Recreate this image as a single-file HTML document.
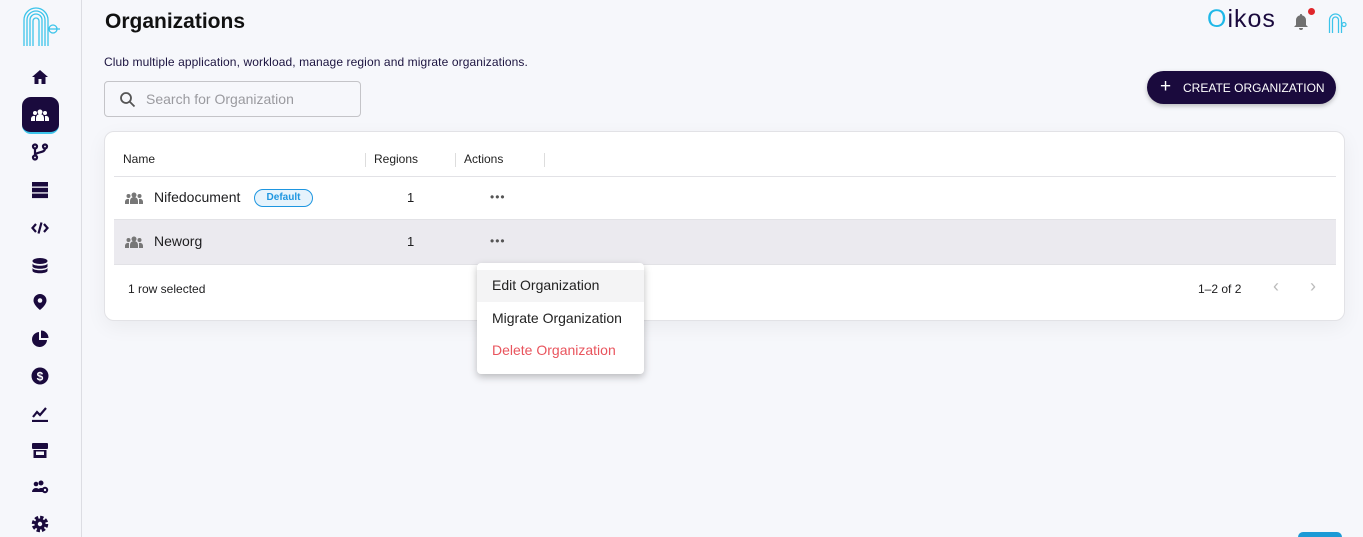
<!DOCTYPE html>
<html><head><meta charset="utf-8"><style>
*{box-sizing:border-box;margin:0;padding:0}
html{width:1363px;height:537px;overflow:hidden}
body{width:1363px;height:537px;overflow:hidden;background:#f6f7fb;font-family:"Liberation Sans",sans-serif;color:#1d1d1f;position:relative}
.side{position:absolute;left:0;top:0;width:82px;height:537px;border-right:1px solid #dcdde3;background:#f6f7fb}
.ic{position:absolute;left:31px;width:18px;height:18px}
.abs{position:absolute}
h1{position:absolute;left:105px;top:10px;font-size:21px;font-weight:bold;color:#111}
.sub{position:absolute;left:104px;top:55px;font-size:12px;color:#1c1440;letter-spacing:.1px}
.search{position:absolute;left:104px;top:81px;width:257px;height:36px;border:1px solid #c4c4c8;border-radius:4px;background:#f6f7fb}
.search span{position:absolute;left:41px;top:9px;font-size:14px;color:#9a9a9f}
.btn{position:absolute;left:1147px;top:71px;width:189px;height:33px;border-radius:17px;background:#1a0a3d;color:#fff;font-size:12px;box-shadow:0 2px 5px rgba(0,0,0,.25)}
.card{position:absolute;left:104px;top:131px;width:1241px;height:190px;background:#fff;border:1px solid #e2e2e6;border-radius:10px;box-shadow:0 6px 20px rgba(0,0,0,.05)}
.th{position:absolute;top:20px;font-size:12px;color:#222}
.sep{position:absolute;top:21px;width:1px;height:14px;background:#ddd}
.row{position:absolute;left:9px;width:1222px;height:44px;border-bottom:1px solid #e2e2e6}
.menu{position:absolute;left:477px;top:263px;width:167px;height:111px;background:#fff;border-radius:4px;box-shadow:0 3px 8px rgba(0,0,0,.25);font-size:14px}
.menu div{position:absolute;left:15px}
</style></head><body>
<div class="side">
 <svg class="abs" style="left:20px;top:4px" width="42" height="44" viewBox="0 0 42 44" fill="none" stroke="#3cc4ea" stroke-width="1.3">
  <path d="M4 42V16a12 12 0 0 1 24 0v26"/><path d="M7 42V16a9 9 0 0 1 18 0v26"/><path d="M10 42V16a6 6 0 0 1 12 0v26"/><path d="M13 42V17a3 3 0 0 1 6 0v25"/><circle cx="33" cy="25" r="4"/><path d="M29 25h11"/>
 </svg>
 <svg class="ic" style="top:68px" viewBox="0 0 18 18"><path d="M9 2L1 9h2.5v7h4v-5h3v5h4V9H17z" fill="#1a0a3d"/></svg>
 <div class="abs" style="left:22px;top:97px;width:37px;height:37px;border-radius:9px;background:#1a0a3d;border-bottom:2px solid #3cc4ea"></div>
 <svg class="ic" style="top:106px;left:31px" viewBox="0 0 18 18" fill="#fff"><circle cx="9" cy="6" r="2.5"/><path d="M5 15v-3a4 4 0 0 1 8 0v3z"/><circle cx="4" cy="7" r="2"/><circle cx="14" cy="7" r="2"/><path d="M0 15v-2a3 3 0 0 1 4-3v5zM18 15v-2a3 3 0 0 0-4-3v5z"/></svg>
 <svg class="ic" style="top:143px" viewBox="0 0 18 18" fill="none" stroke="#1a0a3d" stroke-width="2.2"><circle cx="4" cy="3.5" r="2"/><circle cx="4" cy="14.5" r="2"/><circle cx="14" cy="3.5" r="2"/><path d="M4 5.5v7M14 5.5c0 5-10 3-10 7"/></svg>
 <svg class="ic" style="top:181px" viewBox="0 0 18 18" fill="#1a0a3d"><rect x="1" y="1" width="16" height="4.5"/><rect x="1" y="6.8" width="16" height="4.5"/><rect x="1" y="12.6" width="16" height="4.5"/></svg>
 <svg class="ic" style="top:219px" viewBox="0 0 18 18" fill="none" stroke="#1a0a3d" stroke-width="2.2"><path d="M5 5L1.5 9 5 13M13 5l3.5 4-3.5 4M10.5 3.5l-3 11"/></svg>
 <svg class="ic" style="top:257px" viewBox="0 0 18 18" fill="#1a0a3d"><ellipse cx="9" cy="4" rx="7.5" ry="3"/><path d="M1.5 6.5c1 3 14 3 15 0v3c-1 3-14 3-15 0zM1.5 11c1 3 14 3 15 0v3c-1 3-14 3-15 0z"/></svg>
 <svg class="ic" style="top:293px" viewBox="0 0 18 18" fill="#1a0a3d"><path d="M9 1a6.5 6.5 0 0 1 6.5 6.5C15.5 12 9 17 9 17S2.5 12 2.5 7.5A6.5 6.5 0 0 1 9 1z"/><circle cx="9" cy="7.5" r="2.3" fill="#f6f7fb"/></svg>
 <svg class="ic" style="top:330px" viewBox="0 0 18 18" fill="#1a0a3d"><path d="M8 2a7.5 7.5 0 1 0 8 8H8z"/><path d="M10 0.5v7.5h7.5A7.5 7.5 0 0 0 10 .5z"/></svg>
 <svg class="ic" style="top:367px" viewBox="0 0 18 18"><circle cx="9" cy="9" r="8.5" fill="#1a0a3d"/><text x="9" y="13.5" font-size="12" font-weight="bold" fill="#fff" text-anchor="middle" font-family="Liberation Sans">$</text></svg>
 <svg class="ic" style="top:404px" viewBox="0 0 18 18" fill="none" stroke="#1a0a3d" stroke-width="2.2"><path d="M1 17h16M2 13l4-5 3 3 6-7"/></svg>
 <svg class="ic" style="top:441px" viewBox="0 0 18 18" fill="#1a0a3d"><rect x="1" y="2" width="16" height="6" rx="1"/><path d="M2.5 9h13v8h-13z"/><rect x="5" y="10.5" width="8" height="3.5" fill="#f6f7fb"/></svg>
 <svg class="ic" style="top:478px" viewBox="0 0 18 18" fill="#1a0a3d"><circle cx="5" cy="6" r="2.3"/><circle cx="10" cy="5" r="2.5"/><path d="M1 14a4 4 0 0 1 8 0zM6 13a4.5 4.5 0 0 1 8-1v2H6z"/><circle cx="14" cy="12" r="3.2"/><circle cx="14" cy="12" r="1.2" fill="#f6f7fb"/></svg>
 <svg class="ic" style="top:515px" viewBox="0 0 18 18"><circle cx="9" cy="9" r="6" fill="none" stroke="#1a0a3d" stroke-width="4.5" stroke-dasharray="3 1.7"/><circle cx="9" cy="9" r="5.5" fill="#1a0a3d"/><circle cx="9" cy="9" r="2.2" fill="#f6f7fb"/></svg>
</div>

<h1>Organizations</h1>
<div class="sub">Club multiple application, workload, manage region and migrate organizations.</div>
<div class="search"><svg class="abs" style="left:14px;top:9px" width="17" height="17" viewBox="0 0 17 17" fill="none" stroke="#555" stroke-width="1.8"><circle cx="7" cy="7" r="5"/><path d="M11 11l4.5 4.5"/></svg><span>Search for Organization</span></div>

<div class="abs" style="left:1207px;top:5px;font-size:25px;color:#1a0a3d;letter-spacing:1px"><span style="color:#1fb8e8">O</span>ikos</div>
<svg class="abs" style="left:1293px;top:13px" width="16" height="18" viewBox="0 0 16 18" fill="#707070"><path d="M8 1a1 1 0 0 1 1 1.2A5 5 0 0 1 13 7v5l2 2H1l2-2V7a5 5 0 0 1 4-4.8A1 1 0 0 1 8 1zM6 15h4a2 2 0 0 1-4 0z"/></svg>
<div class="abs" style="left:1308px;top:8px;width:7px;height:7px;border-radius:50%;background:#e0262b"></div>
<svg class="abs" style="left:1327px;top:12px" width="22" height="22" viewBox="0 0 42 44" fill="none" stroke="#3cc4ea" stroke-width="2.5"><path d="M4 42V16a12 12 0 0 1 24 0v26"/><path d="M10 42V16a6 6 0 0 1 12 0v26"/><circle cx="33" cy="25" r="4"/></svg>

<div class="btn"><span class="abs" style="left:13px;top:5px;font-size:19px">+</span><span class="abs" style="left:36px;top:10px">CREATE ORGANIZATION</span></div>

<div class="card">
 <div class="th" style="left:18px">Name</div>
 <div class="sep" style="left:260px"></div>
 <div class="th" style="left:269px">Regions</div>
 <div class="sep" style="left:350px"></div>
 <div class="th" style="left:359px">Actions</div>
 <div class="sep" style="left:439px"></div>
 <div class="row" style="top:0;height:45px"></div>
 <div class="row" style="top:44px"></div>
 <div class="row" style="top:88px;background:#ebeaef;height:45px"></div>
 <svg class="abs" style="left:19px;top:60px" width="20" height="12" viewBox="0 0 20 12" fill="#777"><circle cx="10" cy="3" r="2.5"/><path d="M6 12v-3a4 4 0 0 1 8 0v3z"/><circle cx="4.5" cy="4" r="2"/><circle cx="15.5" cy="4" r="2"/><path d="M1 12v-2a3 3 0 0 1 4-3v5zM19 12v-2a3 3 0 0 0-4-3v5z"/></svg>
 <div class="abs" style="left:49px;top:57px;font-size:14px">Nifedocument</div>
 <div class="abs" style="left:149px;top:57px;width:59px;height:18px;border:1px solid #1e96e0;border-radius:9px;background:#e6f3fc;color:#1e96e0;font-size:10px;font-weight:bold;text-align:center;line-height:16px">Default</div>
 <div class="abs" style="left:302px;top:58px;font-size:13px">1</div>
 <div class="abs" style="left:385px;top:58px;font-size:12px;color:#555;letter-spacing:1px">•••</div>
 <svg class="abs" style="left:19px;top:104px" width="20" height="12" viewBox="0 0 20 12" fill="#777"><circle cx="10" cy="3" r="2.5"/><path d="M6 12v-3a4 4 0 0 1 8 0v3z"/><circle cx="4.5" cy="4" r="2"/><circle cx="15.5" cy="4" r="2"/><path d="M1 12v-2a3 3 0 0 1 4-3v5zM19 12v-2a3 3 0 0 0-4-3v5z"/></svg>
 <div class="abs" style="left:49px;top:101px;font-size:14px">Neworg</div>
 <div class="abs" style="left:302px;top:102px;font-size:13px">1</div>
 <div class="abs" style="left:385px;top:102px;font-size:12px;color:#555;letter-spacing:1px">•••</div>
 <div class="abs" style="left:23px;top:150px;font-size:12px">1 row selected</div>
 <div class="abs" style="left:1093px;top:150px;font-size:12px">1–2 of 2</div>
 <div class="abs" style="left:1168px;top:144px;font-size:18px;color:#bbb">‹</div>
 <div class="abs" style="left:1205px;top:144px;font-size:18px;color:#bbb">›</div>
</div>

<div class="menu">
 <div style="left:0;top:7px;width:167px;height:32px;background:#f4f4f5"></div>
 <div style="top:14px;color:#222">Edit Organization</div>
 <div style="top:47px;color:#222">Migrate Organization</div>
 <div style="top:79px;color:#e9545d">Delete Organization</div>
</div>
<div class="abs" style="left:1298px;top:532px;width:44px;height:5px;border-radius:22px 22px 0 0;background:#1b9ad6"></div>
</body></html>
